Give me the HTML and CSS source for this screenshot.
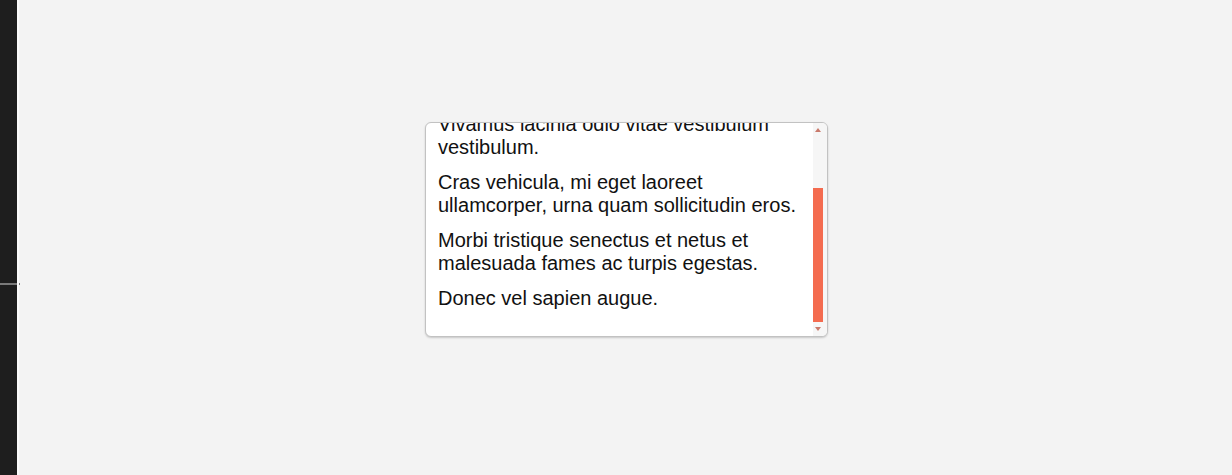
FILE: index.html
```html
<!DOCTYPE html>
<html lang="en">
<head>
<meta charset="utf-8">
<title>Scroll box</title>
<link rel="stylesheet" href="styles.css">
</head>
<body>
<div class="sidebar"><div class="sidebar-line"></div></div>
<div class="strip"></div>
<main class="main">
  <div class="box">
    <div class="viewport">
      <div class="content">
        <p>Lorem ipsum dolor sit amet, consectetur adipiscing elit.</p>
        <p>Vivamus lacinia odio vitae vestibulum vestibulum.</p>
        <p>Cras vehicula, mi eget laoreet ullamcorper, urna quam sollicitudin eros.</p>
        <p>Morbi tristique senectus et netus et malesuada fames ac turpis egestas.</p>
        <p>Donec vel sapien augue.</p>
      </div>
    </div>
    <div class="scrollbar">
      <div class="sb-btn">
        <svg width="6" height="4" viewBox="0 0 6 4"><polygon points="0,4 3,0 6,4" fill="#c97a6c"/></svg>
      </div>
      <div class="sb-track"><div class="sb-thumb"></div></div>
      <div class="sb-btn">
        <svg width="6" height="4" viewBox="0 0 6 4"><polygon points="0,0 6,0 3,4" fill="#c97a6c"/></svg>
      </div>
    </div>
  </div>
</main>
</body>
</html>
```
FILE: styles.css
```css
html, body {
  margin: 0;
  height: 100%;
}
body {
  display: flex;
  background: #f3f3f3;
  font-family: "Liberation Sans", Arial, sans-serif;
  overflow: hidden;
}
.sidebar {
  width: 17px;
  background: #1e1e1e;
  display: flex;
  flex-direction: column;
}
.sidebar-line {
  margin-top: 283px;
  height: 2px;
  width: 20px;
  background: #7a7a7a;
}
.strip {
  width: 2px;
  background: #fbfbfb;
}
.main {
  flex: 1;
  display: flex;
  align-items: center;
  justify-content: center;
  padding-bottom: 16px;
  padding-left: 2px;
}
.box {
  box-sizing: border-box;
  width: 403px;
  height: 215px;
  background: #fff;
  border: 1px solid #c2c2c2;
  border-radius: 6px;
  box-shadow: 0 1px 2px rgba(0, 0, 0, 0.18);
  display: flex;
  overflow: hidden;
}
.viewport {
  flex: 1;
  overflow: hidden;
  display: flex;
  flex-direction: column-reverse;
}
.content {
  flex-shrink: 0;
  padding: 12px 0 26px 12px;
  color: #111;
  font-size: 20px;
  line-height: 23.5px;
}
.content p {
  margin: 0 0 11px 0;
}
.content p:last-child {
  margin-bottom: 0;
}
.scrollbar {
  width: 14px;
  display: flex;
  flex-direction: column;
  background: #f6f6f6;
}
.sb-btn {
  height: 14px;
  width: 10px;
  display: flex;
  align-items: center;
  justify-content: center;
}
.sb-track {
  flex: 1;
  display: flex;
  flex-direction: column;
  justify-content: flex-end;
}
.sb-thumb {
  width: 10px;
  height: 134px;
  background: #f46b4f;
}
```
